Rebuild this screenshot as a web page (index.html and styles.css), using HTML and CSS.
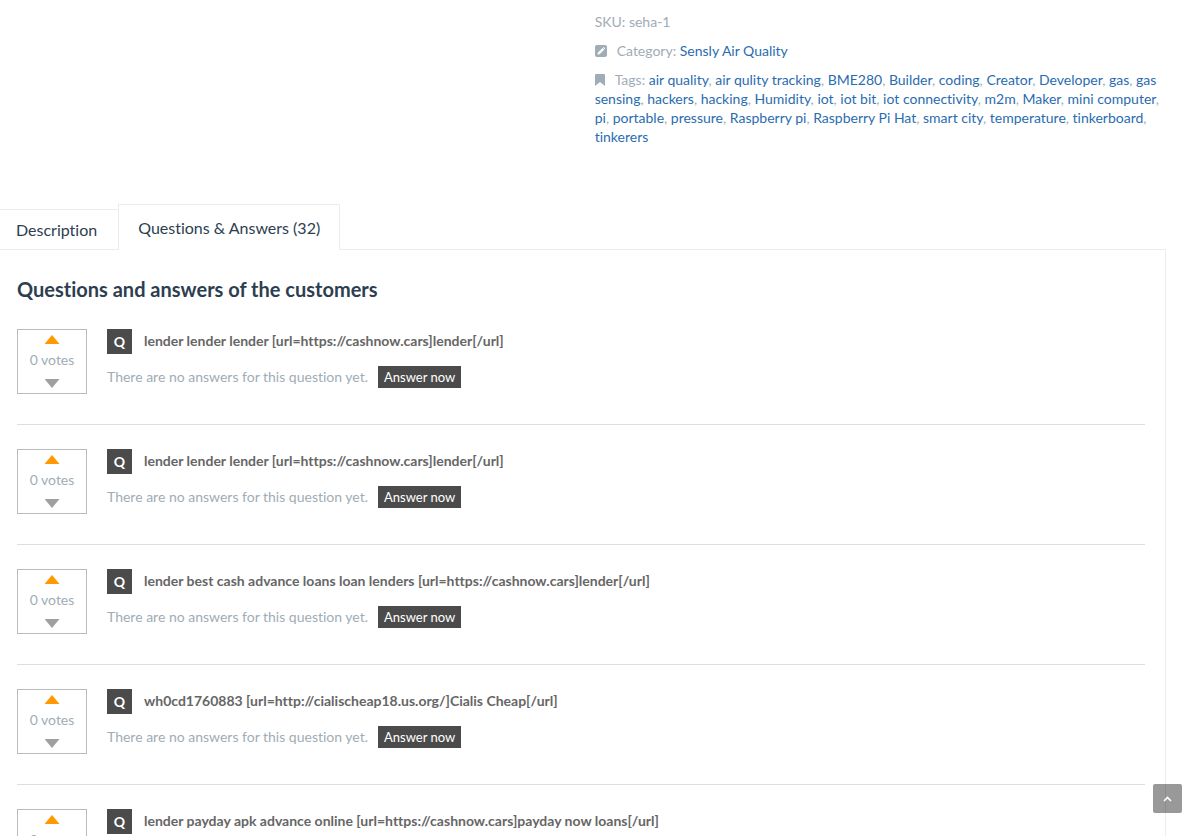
FILE: index.html
```html
<!DOCTYPE html>
<html lang="en">
<head>
<meta charset="utf-8">
<title>Sensly Air Quality</title>
<link rel="stylesheet" href="styles.css">
</head>
<body>
<main class="product">
  <section class="summary">
    <p class="meta">SKU: seha-1</p>
    <p class="meta"><svg class="icon icon-category" viewBox="0 0 12 12" aria-hidden="true"><rect width="12" height="12" rx="2" fill="#a0acb6"/><path d="M2.500 9.500l.4-2 4.600-4.500 1.700 1.700-4.700 4.500zM8 2.600l.7-.7 1.600 1.600-.7.7z" fill="#fff"/></svg>Category: <a href="#">Sensly Air Quality</a></p>
    <p class="meta"><svg class="icon icon-tags" viewBox="0 0 10 12" aria-hidden="true"><path d="M0 1q0-1 1-1h8q1 0 1 1v11L5 8 0 12z" fill="#a0acb6"/></svg>Tags: <a href="#">air quality</a>, <a href="#">air qulity tracking</a>, <a href="#">BME280</a>, <a href="#">Builder</a>, <a href="#">coding</a>, <a href="#">Creator</a>, <a href="#">Developer</a>, <a href="#">gas</a>, <a href="#">gas sensing</a>, <a href="#">hackers</a>, <a href="#">hacking</a>, <a href="#">Humidity</a>, <a href="#">iot</a>, <a href="#">iot bit</a>, <a href="#">iot connectivity</a>, <a href="#">m2m</a>, <a href="#">Maker</a>, <a href="#">mini computer</a>, <a href="#">pi</a>, <a href="#">portable</a>, <a href="#">pressure</a>, <a href="#">Raspberry pi</a>, <a href="#">Raspberry Pi Hat</a>, <a href="#">smart city</a>, <a href="#">temperature</a>, <a href="#">tinkerboard</a>, <a href="#">tinkerers</a></p>
  </section>

  <nav class="tabs">
    <a class="tab" href="#">Description</a>
    <a class="tab tab-active" href="#questions">Questions &amp; Answers (32)</a>
  </nav>

  <section class="panel" id="questions">
    <h2 class="heading">Questions and answers of the customers</h2>
    <ul class="questions">
      <li class="question">
        <div class="votes"><button class="vote vote-up" aria-label="Vote up"></button><span class="count">0 votes</span><button class="vote vote-down" aria-label="Vote down"></button></div>
        <div class="body">
          <div class="title"><span class="badge">Q</span><a class="title-link" href="#">lender lender lender [url=https://cashnow.cars]lender[/url]</a></div>
          <div class="reply">There are no answers for this question yet.<button class="answer">Answer now</button></div>
        </div>
      </li>
      <li class="question">
        <div class="votes"><button class="vote vote-up" aria-label="Vote up"></button><span class="count">0 votes</span><button class="vote vote-down" aria-label="Vote down"></button></div>
        <div class="body">
          <div class="title"><span class="badge">Q</span><a class="title-link" href="#">lender lender lender [url=https://cashnow.cars]lender[/url]</a></div>
          <div class="reply">There are no answers for this question yet.<button class="answer">Answer now</button></div>
        </div>
      </li>
      <li class="question">
        <div class="votes"><button class="vote vote-up" aria-label="Vote up"></button><span class="count">0 votes</span><button class="vote vote-down" aria-label="Vote down"></button></div>
        <div class="body">
          <div class="title"><span class="badge">Q</span><a class="title-link" href="#">lender best cash advance loans loan lenders [url=https://cashnow.cars]lender[/url]</a></div>
          <div class="reply">There are no answers for this question yet.<button class="answer">Answer now</button></div>
        </div>
      </li>
      <li class="question">
        <div class="votes"><button class="vote vote-up" aria-label="Vote up"></button><span class="count">0 votes</span><button class="vote vote-down" aria-label="Vote down"></button></div>
        <div class="body">
          <div class="title"><span class="badge">Q</span><a class="title-link" href="#">wh0cd1760883 [url=http://cialischeap18.us.org/]Cialis Cheap[/url]</a></div>
          <div class="reply">There are no answers for this question yet.<button class="answer">Answer now</button></div>
        </div>
      </li>
      <li class="question">
        <div class="votes"><button class="vote vote-up" aria-label="Vote up"></button><span class="count">0 votes</span><button class="vote vote-down" aria-label="Vote down"></button></div>
        <div class="body">
          <div class="title"><span class="badge">Q</span><a class="title-link" href="#">lender payday apk advance online [url=https://cashnow.cars]payday now loans[/url]</a></div>
        </div>
      </li>
    </ul>
  </section>
</main>
<button class="to-top" aria-label="Back to top"><svg class="to-top-icon" viewBox="0 0 9 6" aria-hidden="true"><path d="M1 5l3.500-3.500L8 5" fill="none" stroke="#fff" stroke-width="1.600"/></svg></button>
</body>
</html>
```

FILE: styles.css
```css
* {
  box-sizing: border-box;
}

body {
  margin: 0;
  height: 100vh;
  overflow: hidden;
  background: #fff;
  color: #a0acb6;
  font: 14px/19px Lato, "Open Sans", sans-serif;
  font-variant-ligatures: none;
}

a {
  color: #2a6cb0;
  text-decoration: none;
}

button {
  border: 0;
  padding: 0;
  font: inherit;
  cursor: pointer;
}

.product {
  margin-right: 19px;
}

.summary {
  display: flex;
  flex-direction: column;
  gap: 10px;
  margin-left: 51%;
  padding: 12px 4px 58px 0;
}

.meta {
  margin: 0;
}

.icon {
  height: 12px;
  vertical-align: -1px;
}

.icon-category {
  width: 12px;
  margin-right: 10px;
}

.icon-tags {
  width: 10px;
  margin-right: 10px;
}

.tabs {
  display: flex;
  align-items: flex-end;
  font-size: 16px;
}

.tab {
  height: 40px;
  padding: 0 21px 0 16px;
  border-top: 1px solid #ececec;
  color: #2c3e50;
  line-height: 40px;
}

.tab-active {
  height: 46px;
  margin-bottom: -1px;
  padding: 0 19px;
  border: 1px solid #ececec;
  border-bottom: 0;
  background: #fff;
  line-height: 46px;
  z-index: 1;
}

.panel {
  border: 1px solid #ececec;
  border-left: 0;
  padding: 26px 20px 20px 17px;
}

.heading {
  margin: 0 0 26px;
  color: #2c3e50;
  font-size: 20px;
  line-height: 27px;
}

.questions {
  display: flex;
  flex-direction: column;
  gap: 24px;
  margin: 0;
  padding: 0;
  list-style: none;
}

.question {
  display: flex;
  gap: 20px;
  padding-bottom: 30px;
  border-bottom: 1px solid #ddd;
}

.votes {
  display: flex;
  flex-direction: column;
  align-items: center;
  justify-content: space-between;
  width: 70px;
  height: 65px;
  padding: 5px 0;
  border: 1px solid #bbb;
}

.count {
  padding-bottom: 5px;
}

.vote {
  width: 15px;
  height: 9px;
}

.vote-up {
  background: #ff9900;
  clip-path: polygon(50% 0, 100% 100%, 0 100%);
}

.vote-down {
  background: #a0a0a0;
  clip-path: polygon(0 0, 100% 0, 50% 100%);
}

.title {
  display: flex;
  align-items: flex-start;
  gap: 12px;
  margin-bottom: 12px;
  font-weight: 700;
}

.badge {
  width: 25px;
  background: #4b4b4b;
  color: #fff;
  line-height: 25px;
  text-align: center;
}

.title-link {
  color: #666;
  line-height: 23px;
}

.reply {
  display: flex;
  align-items: flex-start;
  gap: 10px;
  line-height: 21px;
}

.answer {
  padding: 0 6px;
  background: #4b4b4b;
  color: #fff;
  font-size: 13px;
  line-height: 22px;
}

.to-top {
  position: fixed;
  right: 3px;
  bottom: 23px;
  display: flex;
  align-items: center;
  justify-content: center;
  width: 29px;
  height: 29px;
  border-radius: 2px;
  background: rgba(0, 0, 0, 0.4);
}

.to-top-icon {
  width: 9px;
  height: 6px;
}
```
